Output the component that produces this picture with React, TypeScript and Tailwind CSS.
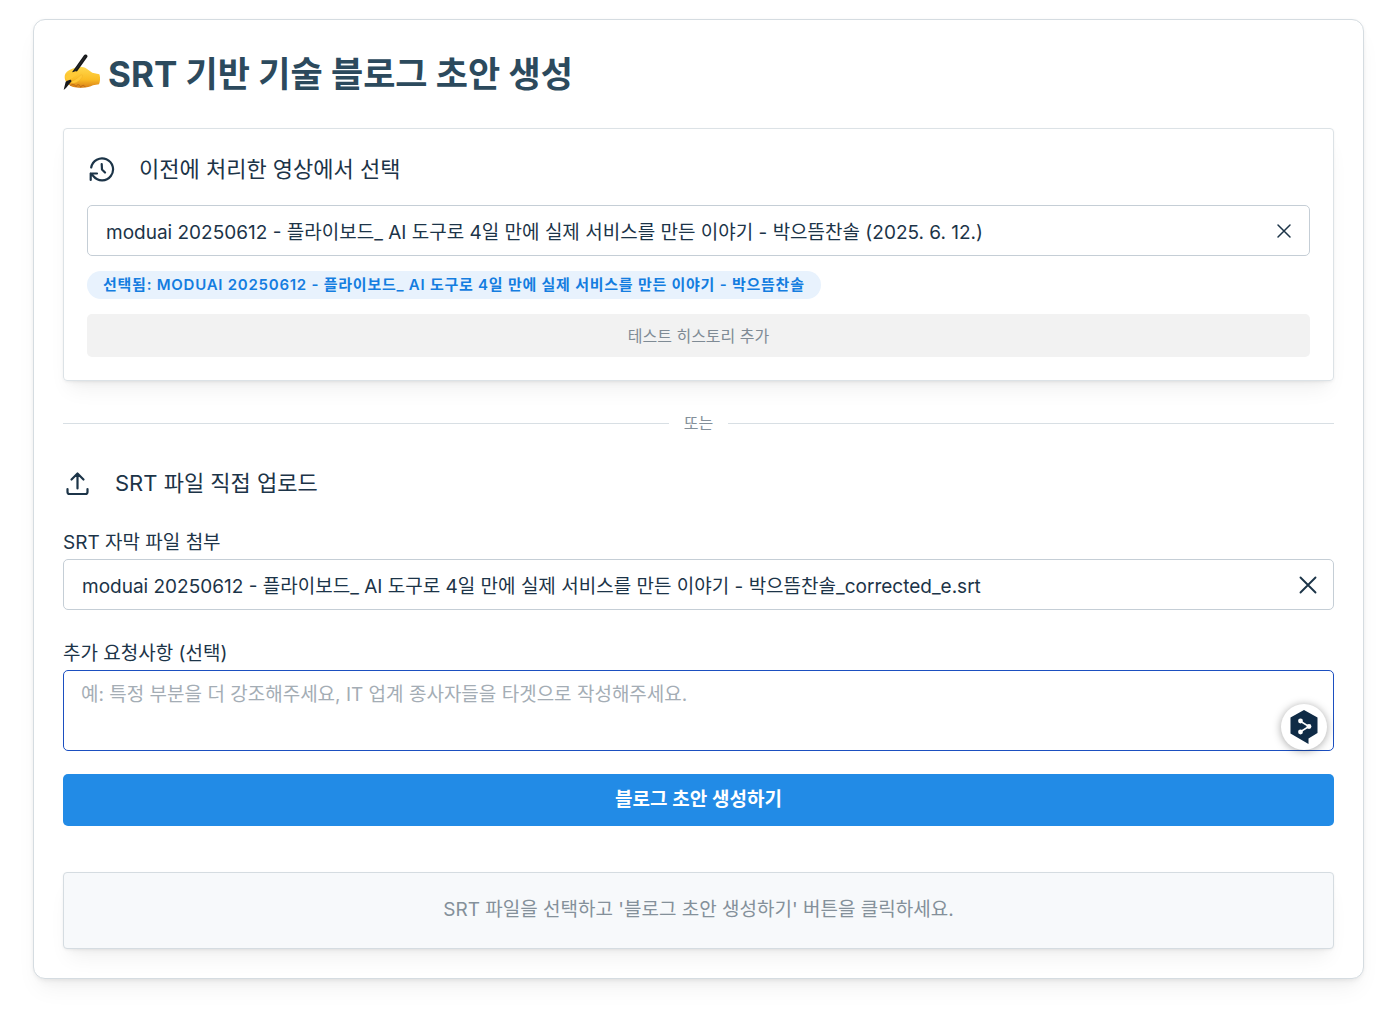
import { useState } from "react";

const CloseIcon: React.FC<{ size: number }> = ({ size }) => (
  <svg width={size} height={size} viewBox="0 0 16 16" fill="none" stroke="currentColor" strokeWidth="1.5" strokeLinecap="round">
    <path d="M2 2l12 12M14 2L2 14" />
  </svg>
);

const WritingHand: React.FC = () => (
  <svg className="h-10 w-[37px] shrink-0" viewBox="15 18 111 120" role="img" aria-label="글쓰기">
    <defs>
      <linearGradient id="skin" x1="0" y1="0" x2="0" y2="1">
        <stop offset="0" stopColor="#ffd94f" />
        <stop offset="0.6" stopColor="#fbbd25" />
        <stop offset="1" stopColor="#d87f17" />
      </linearGradient>
    </defs>
    <path d="M22 77C27 69 38 63 49 60C61 54 76 55 86 62L103 74L124 79C127 87 127 100 123 109L105 112C96 118 80 120 66 119C49 120 34 115 29 106C20 99 18 86 22 77Z" fill="url(#skin)" />
    <path d="M38 112C45 107 52 111 54 115M54 115C59 107 65 109 68 117M68 117C73 110 79 111 81 116" fill="none" stroke="#bd6815" strokeWidth="3" strokeLinecap="round" />
    <path d="M31 101C43 102 56 93 66 83C72 78 76 82 72 88C67 97 58 104 47 106" fill="#ffc935" stroke="#eba729" strokeWidth="1" strokeLinecap="round" />
    <path d="M78 22C81 17 91 21 88 27L52 77L42 73Z" fill="#17191b" />
    <path d="M82 25L50 70" stroke="#34383b" strokeWidth="2" />
    <path d="M23 101L36 94L41 99L24 120L17 126Z" fill="#17191b" />
    <path d="M22 85C30 78 40 74 52 70C59 70 61 76 57 80L34 96C28 99 22 94 22 85Z" fill="#ffca36" />
  </svg>
);

const App: React.FC = () => {
  const [history, setHistory] = useState("moduai 20250612 - 플라이보드_ AI 도구로 4일 만에 실제 서비스를 만든 이야기 - 박으뜸찬솔 (2025. 6. 12.)");
  const [fileName, setFileName] = useState("moduai 20250612 - 플라이보드_ AI 도구로 4일 만에 실제 서비스를 만든 이야기 - 박으뜸찬솔_corrected_e.srt");
  const [request, setRequest] = useState("");

  return (
    <main className="pt-[19px] pr-9 pb-[33px] pl-[33px] font-['Inter','Noto_Sans_CJK_KR',sans-serif] text-[#1c3448]">
      <section className="rounded-xl border border-[#d5dce1] bg-white px-[29px] pt-8 pb-[29px] shadow-[0_1px_4px_rgba(0,0,0,0.05),0_14px_24px_-6px_rgba(0,0,0,0.06),0_8px_10px_-6px_rgba(0,0,0,0.05)]">
        <h1 className="flex h-11 items-center gap-2 text-[35px] font-bold text-[#2c4a5d]">
          <WritingHand />
          <span>SRT 기반 기술 블로그 초안 생성</span>
        </h1>

        <div className="mt-8 rounded border border-[#dce2e6] px-[23px] pt-5 pb-[23px] shadow-[0_1px_3px_rgba(0,0,0,0.05),0_14px_20px_-6px_rgba(0,0,0,0.06),0_7px_8px_-6px_rgba(0,0,0,0.05)]">
          <h2 className="flex h-10 items-center gap-6 text-[22px]">
            <svg className="size-7" viewBox="0 0 28 28" fill="none" stroke="currentColor" strokeWidth="2.2" strokeLinecap="round" strokeLinejoin="round">
              <path d="M4.2 12.500A11 11 0 1 1 6.500 21.300L3.700 18.500M3.700 25V18.500H10M14.700 9L15 14.500L18 17.500" />
            </svg>
            <label htmlFor="history">이전에 처리한 영상에서 선택</label>
          </h2>
          <div className="mt-4 flex h-[51px] items-center rounded-[5px] border border-[#c5ced6] pr-[17px] pl-[18px]">
            <input id="history" readOnly value={history} className="h-full min-w-0 flex-1 bg-transparent text-[19px] outline-none" />
            <button type="button" aria-label="선택 지우기" onClick={() => setHistory("")}>
              <CloseIcon size={16} />
            </button>
          </div>
          <div className="mt-[15px] flex">
            <span className="flex h-7 items-center rounded-full bg-[#e8f2fd] px-4 text-[15px] font-semibold tracking-wider text-[#147de0] uppercase">
              선택됨: moduai 20250612 - 플라이보드_ AI 도구로 4일 만에 실제 서비스를 만든 이야기 - 박으뜸찬솔
            </span>
          </div>
          <button type="button" className="mt-[15px] h-[43px] w-full rounded-[5px] bg-[#f2f2f2] text-base text-[#7f8b95]">
            테스트 히스토리 추가
          </button>
        </div>

        <div className="mt-[30px] flex h-6 items-center gap-[15px] text-base text-[#84909a]">
          <span className="h-px flex-1 bg-[#d8dfe4]" />
          또는
          <span className="h-px flex-1 bg-[#d8dfe4]" />
        </div>

        <h2 className="mt-7 flex h-10 items-center gap-6 text-[22px]">
          <svg className="size-7" viewBox="0 0 28 28" fill="none" stroke="currentColor" strokeWidth="2.2" strokeLinecap="round" strokeLinejoin="round">
            <path d="M4.500 20v3a2 2 0 0 0 2 2h16a2 2 0 0 0 2-2v-3M8.500 10.500l6-6 6 6M14.500 4.500V19.500" />
          </svg>
          SRT 파일 직접 업로드
        </h2>

        <label htmlFor="file" className="mt-6 block h-8 text-[19px] leading-8">SRT 자막 파일 첨부</label>
        <div className="flex h-[51px] items-center rounded-[5px] border border-[#c5ced6] pr-[15px] pl-[18px]">
          <input id="file" readOnly value={fileName} className="h-full min-w-0 flex-1 bg-transparent text-[19px] outline-none" />
          <button type="button" aria-label="파일 지우기" onClick={() => setFileName("")}>
            <CloseIcon size={20} />
          </button>
        </div>

        <label htmlFor="request" className="mt-7 block h-8 text-[19px] leading-8">추가 요청사항 (선택)</label>
        <div className="relative">
          <textarea
            id="request"
            value={request}
            onChange={(e) => setRequest(e.target.value)}
            placeholder="예: 특정 부분을 더 강조해주세요, IT 업계 종사자들을 타겟으로 작성해주세요."
            className="block h-[81px] w-full resize-none rounded-[5px] border border-[#1b4fc0] px-[17px] py-2.5 text-[19px] leading-7 outline-none placeholder:text-[#a4adb5]"
          />
          <button type="button" aria-label="번역" className="absolute right-[7px] bottom-[1px] flex size-[46px] items-center justify-center rounded-full bg-white shadow-[0_1px_8px_rgba(0,0,0,0.35)]">
            <svg className="h-[34px] w-7" viewBox="0 0 28 34">
              <path d="M14 0L27.500 7.500V23L18.500 28.500V34L0.500 23.500V7.500z" fill="#0f2b46" />
              <path d="M10 11l9 5.500-9 5.500" fill="none" stroke="white" strokeWidth="1.500" />
              <g fill="white"><circle cx="10.500" cy="11" r="2.400" /><circle cx="19" cy="16.500" r="2.400" /><circle cx="10.500" cy="22" r="2.400" /></g>
            </svg>
          </button>
        </div>

        <button type="button" className="mt-[23px] h-[52px] w-full rounded-[5px] bg-[#228be6] text-[19px] font-semibold text-white">
          블로그 초안 생성하기
        </button>

        <div className="mt-[46px] flex h-[77px] items-center justify-center rounded border border-[#d5dce1] bg-[#f7f9fb] text-[19px] text-[#84909a] shadow-[0_1px_3px_rgba(0,0,0,0.05),0_14px_20px_-6px_rgba(0,0,0,0.06),0_7px_8px_-6px_rgba(0,0,0,0.05)]">
          SRT 파일을 선택하고 '블로그 초안 생성하기' 버튼을 클릭하세요.
        </div>
      </section>
    </main>
  );
};

export default App;
